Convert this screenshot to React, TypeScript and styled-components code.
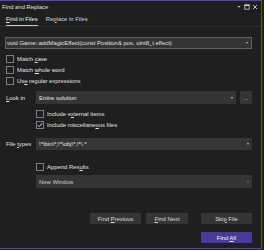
import React from 'react';
import styled, { createGlobalStyle } from 'styled-components';

const GlobalStyle = createGlobalStyle`
  html, body {
    margin: 0;
    padding: 0;
    background: #1f1f1f;
  }
  body {
    font-family: "Liberation Sans", Arial, sans-serif;
    font-size: 5.9px;
    color: #e0e0e0;
  }
  u {
    text-underline-offset: 1px;
  }
`;

const Window = styled.div`
  width: 262px;
  height: 249px;
  box-sizing: border-box;
  border: 1px solid #5646a6;
  border-left: none;
  display: flex;
  flex-direction: column;
`;

const TitleBar = styled.div`
  height: 11px;
  display: flex;
  align-items: center;
  padding: 0 3px 0 2px;
  gap: 3px;
`;

const Grip = styled.div`
  flex: 1;
  height: 3px;
  background-image: radial-gradient(#4a4a4a 0.6px, transparent 0.7px);
  background-size: 2px 2px;
`;

const TitleIcons = styled.div`
  display: flex;
  align-items: center;
  gap: 2px;
  svg {
    display: block;
  }
`;

const TabBar = styled.div`
  height: 14px;
  display: flex;
  align-items: stretch;
  gap: 8px;
  padding-left: 6px;
  border-bottom: 1px solid #2e2e2e;
`;

const Tab = styled.div<{ $active?: boolean }>`
  display: flex;
  align-items: center;
  border-bottom: 1px solid ${(p) => (p.$active ? '#c8c8c8' : 'transparent')};
  color: ${(p) => (p.$active ? '#f0f0f0' : '#d6d6d6')};
`;

const Body = styled.div`
  display: flex;
  flex-direction: column;
  padding: 0 9px 0 5px;
`;

const SearchBox = styled.div`
  margin-top: 10px;
  height: 12px;
  box-sizing: border-box;
  border: 1px solid #606060;
  background: #343434;
  display: flex;
  align-items: center;
  padding: 0 3px 0 1px;
  justify-content: space-between;
  white-space: nowrap;
  overflow: hidden;
`;

const Arrow = styled.span<{ $dim?: boolean }>`
  width: 0;
  height: 0;
  border-left: 1.5px solid transparent;
  border-right: 1.5px solid transparent;
  border-top: 2px solid ${(p) => (p.$dim ? '#707070' : '#bdbdbd')};
  flex-shrink: 0;
`;

const CheckList = styled.div<{ $top: number; $indent?: number }>`
  margin-top: ${(p) => p.$top}px;
  padding-left: ${(p) => p.$indent ?? 1}px;
  display: flex;
  flex-direction: column;
`;

const CheckRow = styled.label`
  height: 11px;
  display: flex;
  align-items: center;
  gap: 3px;
`;

const Box = styled.span`
  width: 8px;
  height: 8px;
  box-sizing: border-box;
  border: 1px solid #7c7c7c;
  background: #1f1f1f;
  display: flex;
  align-items: center;
  justify-content: center;
  svg {
    display: block;
  }
`;

const FieldRow = styled.div<{ $top: number; $h: number }>`
  margin-top: ${(p) => p.$top}px;
  height: ${(p) => p.$h}px;
  display: flex;
  align-items: stretch;
`;

const FieldLabel = styled.div`
  width: 30px;
  padding-left: 1px;
  display: flex;
  align-items: center;
`;

const Select = styled.div<{ $dim?: boolean }>`
  flex: 1;
  background: #353535;
  display: flex;
  align-items: center;
  justify-content: space-between;
  padding: 0 3px;
  color: ${(p) => (p.$dim ? '#c8c8c8' : '#e6e6e6')};
`;

const MoreButton = styled.div`
  width: 12px;
  margin-left: 4px;
  background: #353535;
  display: flex;
  align-items: center;
  justify-content: center;
  color: #c8c8c8;
  font-size: 5px;
  letter-spacing: -0.3px;
`;

const ButtonRow = styled.div<{ $top: number }>`
  margin-top: ${(p) => p.$top}px;
  height: 11px;
  display: flex;
  justify-content: flex-end;
`;

const Button = styled.div<{ $w: number; $gap?: number; $primary?: boolean }>`
  width: ${(p) => p.$w}px;
  margin-left: ${(p) => p.$gap ?? 0}px;
  background: ${(p) => (p.$primary ? '#4b3b98' : '#353535')};
  color: ${(p) => (p.$primary ? '#f4f4f4' : '#dcdcdc')};
  display: flex;
  align-items: center;
  justify-content: center;
  white-space: pre;
`;

const Check = () => (
  <svg width="6" height="6" viewBox="0 0 6 6">
    <path d="M0.8 3.2 L2.3 4.7 L5.2 1.2" fill="none" stroke="#e6e6e6" strokeWidth="0.9" />
  </svg>
);

const App: React.FC = () => {
  return (
    <>
      <GlobalStyle />
      <Window>
        <TitleBar>
          <span>Find and Replace</span>
          <Grip />
          <TitleIcons>
            <svg width="6" height="6" viewBox="0 0 6 6">
              <path d="M1.5 2 L4.5 2 L3 3.8 Z" fill="#cfcfcf" />
            </svg>
            <svg width="6" height="6" viewBox="0 0 6 6">
              <rect x="0.8" y="0.8" width="4.4" height="4.4" fill="none" stroke="#cfcfcf" strokeWidth="0.8" />
              <rect x="0.8" y="0.8" width="4.4" height="1.2" fill="#cfcfcf" />
            </svg>
            <svg width="6" height="6" viewBox="0 0 6 6">
              <path d="M1 1 L5 5 M5 1 L1 5" stroke="#cfcfcf" strokeWidth="0.9" />
            </svg>
          </TitleIcons>
        </TitleBar>
        <TabBar>
          <Tab $active>
            <span><u>F</u>ind in Files</span>
          </Tab>
          <Tab>
            <span>Re<u>p</u>lace in Files</span>
          </Tab>
        </TabBar>
        <Body>
          <SearchBox>
            <span>void Game::addMagicEffect(const Position&amp; pos, uint8_t effect)</span>
            <Arrow />
          </SearchBox>
          <CheckList $top={4}>
            <CheckRow>
              <Box />
              <span>Match <u>c</u>ase</span>
            </CheckRow>
            <CheckRow>
              <Box />
              <span>Match <u>w</u>hole word</span>
            </CheckRow>
            <CheckRow>
              <Box />
              <span>Us<u>e</u> regular expressions</span>
            </CheckRow>
          </CheckList>
          <FieldRow $top={5} $h={13}>
            <FieldLabel>
              <span><u>L</u>ook in</span>
            </FieldLabel>
            <Select>
              <span>Entire solution</span>
              <Arrow />
            </Select>
            <MoreButton>...</MoreButton>
          </FieldRow>
          <CheckList $top={4} $indent={31}>
            <CheckRow>
              <Box />
              <span>Include e<u>x</u>ternal items</span>
            </CheckRow>
            <CheckRow>
              <Box>
                <Check />
              </Box>
              <span>Include miscellane<u>o</u>us files</span>
            </CheckRow>
          </CheckList>
          <FieldRow $top={8} $h={12}>
            <FieldLabel>
              <span>File <u>t</u>ypes</span>
            </FieldLabel>
            <Select>
              <span>!*\bin\*;!*\obj\*;!*\.*</span>
              <Arrow />
            </Select>
          </FieldRow>
          <CheckList $top={11} $indent={31}>
            <CheckRow>
              <Box />
              <span>Append Res<u>u</u>lts</span>
            </CheckRow>
          </CheckList>
          <FieldRow $top={3} $h={13}>
            <FieldLabel />
            <Select $dim>
              <span>New Window</span>
              <Arrow $dim />
            </Select>
          </FieldRow>
          <ButtonRow $top={25}>
            <Button $w={51}><span>Find <u>P</u>revious</span></Button>
            <Button $w={42} $gap={5}><span><u>F</u>ind Next</span></Button>
            <Button $w={51} $gap={13}><span>Ski<u>p</u> File</span></Button>
          </ButtonRow>
          <ButtonRow $top={8}>
            <Button $w={51} $primary><span>Find <u>A</u>ll</span></Button>
          </ButtonRow>
        </Body>
      </Window>
    </>
  );
};

export default App;
